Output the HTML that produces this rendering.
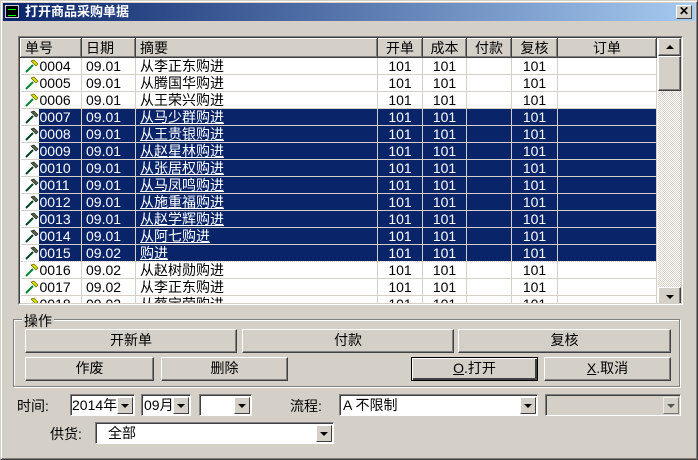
<!DOCTYPE html><html><head><meta charset="utf-8"><style>
*{box-sizing:border-box;margin:0;padding:0}
body{width:698px;height:460px;overflow:hidden;background:#d4d0c8;font-family:"Liberation Sans","Noto Sans CJK SC","WenQuanYi Zen Hei",sans-serif;font-size:13px;color:#000;position:relative}
.abs{position:absolute}
.win{left:0;top:0;width:698px;height:460px;border:1px solid;border-color:#d4d0c8 #404040 #404040 #d4d0c8;box-shadow:inset 1px 1px #fff,inset -1px -1px #808080}
.title{left:3px;top:3px;width:692px;height:18px;background:linear-gradient(90deg,#0a246a,#a6caf0);color:#fff;font-weight:bold;font-size:13px;line-height:18px;padding-left:22px}
.ico{left:5px;top:5px;width:14px;height:13px;background:#000;border:1px solid #ccc}
.ico:after{content:"";position:absolute;left:2px;top:3px;width:8px;height:5px;border-top:1px solid #0f0;border-bottom:1px solid #0f0}
.xb{left:676px;top:5px;width:16px;height:14px;background:#d4d0c8;border:1px solid;border-color:#fff #404040 #404040 #fff;font-size:12px;line-height:11px;text-align:center;font-weight:bold;color:#000}
.grid{left:18px;top:36px;width:665px;height:269px;border:1px solid;border-color:#808080 #fff #fff #808080;background:#fff;overflow:hidden}
.grid-in{position:absolute;left:0;top:0;width:663px;height:267px;border:1px solid;border-color:#404040 #d4d0c8 #d4d0c8 #404040;overflow:hidden}
table{border-collapse:collapse;table-layout:fixed;position:absolute;left:0;top:0}
th{height:19px;background:#d4d0c8;font-weight:normal;border:1px solid;border-color:#fff #404040 #404040 #fff;box-shadow:inset -1px -1px #808080;text-align:left;padding-left:4px;font-size:14px;line-height:16px}
th.c{text-align:center;padding-left:0}
td{height:17px;border-right:1px solid #d4d0c8;border-bottom:1px solid #d4d0c8;font-size:14px;line-height:16px;padding-left:4px;white-space:nowrap;overflow:hidden}
td.n{text-align:center;padding-left:0}
td.i{padding-left:2px}
tr.s td{background:#0a246a;color:#fff;border-color:#d4d0c8}
tr.s td.i{background:linear-gradient(90deg,#fff 18px,#0a246a 18px)}
tr.s td.z{text-decoration:underline}
tr.f td{border-bottom:1px dotted #d4d0c8}
.h{display:inline-block;width:16px;height:15px;vertical-align:-3px;margin-right:1px;position:relative}
.h svg{position:absolute;left:0;top:0}
.sb{left:638px;top:0;width:23px;height:267px;background:repeating-conic-gradient(#fff 0 25%,#d4d0c8 0 50%) 0 0/2px 2px}
.btn3{background:#d4d0c8;border:1px solid;border-color:#fff #404040 #404040 #fff;box-shadow:inset -1px -1px #808080}
.grp{left:13px;top:319px;width:667px;height:68px;border:1px solid #808080;box-shadow:1px 1px #fff,inset 1px 1px #fff}
.gl{left:22px;top:311px;background:#d4d0c8;padding:0 2px;font-size:14px}
.b{position:absolute;height:24px;text-align:center;font-size:14px;line-height:21px;background:#d4d0c8;border:1px solid;border-color:#fff #404040 #404040 #fff;box-shadow:inset -1px -1px #808080}
.b.d{border:1px solid #000;box-shadow:inset 1px 1px #fff,inset -2px -2px #404040,inset -1px -1px #808080}
.cb{position:absolute;height:22px;background:#fff;border:1px solid;border-color:#808080 #fff #fff #808080;box-shadow:inset 1px 1px #404040;font-size:14px;line-height:20px;padding-left:3px;white-space:nowrap}
.cb .ar{position:absolute;right:1px;top:2px;width:16px;height:17px;background:#d4d0c8;border:1px solid;border-color:#fff #404040 #404040 #fff}
.cb .ar:after{content:"";position:absolute;left:3px;top:6px;border:4px solid transparent;border-top:4px solid #000;border-bottom:0}
.lbl{position:absolute;font-size:14px}
</style></head><body>
<div class="abs win"></div>
<div class="abs title">打开商品采购单据</div>
<div class="abs ico"></div>
<div class="abs xb">✕</div>
<div class="abs grid"><div class="grid-in">
<table>
<colgroup><col style="width:61px"><col style="width:54px"><col style="width:242px"><col style="width:45px"><col style="width:44px"><col style="width:45px"><col style="width:46px"><col style="width:99px"></colgroup>
<tr><th>单号</th><th>日期</th><th>摘要</th><th class="c">开单</th><th class="c">成本</th><th class="c">付款</th><th class="c">复核</th><th class="c">订单</th></tr>
<tbody>
<tr><td class="i"><span class="h"><svg width="16" height="15"><path d="M3 13L10 6" stroke="#083" stroke-width="2"/><path d="M8 2L13 7L15 5L11 1Z" fill="#dd0" stroke="#660" stroke-width=".7"/></svg></span>0004</td><td>09.01</td><td class="z">从李正东购进</td><td class="n">101</td><td class="n">101</td><td></td><td class="n">101</td><td></td></tr>
<tr><td class="i"><span class="h"><svg width="16" height="15"><path d="M3 13L10 6" stroke="#083" stroke-width="2"/><path d="M8 2L13 7L15 5L11 1Z" fill="#dd0" stroke="#660" stroke-width=".7"/></svg></span>0005</td><td>09.01</td><td class="z">从腾国华购进</td><td class="n">101</td><td class="n">101</td><td></td><td class="n">101</td><td></td></tr>
<tr><td class="i"><span class="h"><svg width="16" height="15"><path d="M3 13L10 6" stroke="#083" stroke-width="2"/><path d="M8 2L13 7L15 5L11 1Z" fill="#dd0" stroke="#660" stroke-width=".7"/></svg></span>0006</td><td>09.01</td><td class="z">从王荣兴购进</td><td class="n">101</td><td class="n">101</td><td></td><td class="n">101</td><td></td></tr>
<tr class="s"><td class="i"><span class="h"><svg width="16" height="15"><path d="M3 13L10 6" stroke="#042" stroke-width="2"/><path d="M8 2L13 7L15 5L11 1Z" fill="#564" stroke="#222" stroke-width=".7"/></svg></span>0007</td><td>09.01</td><td class="z">从马少群购进</td><td class="n">101</td><td class="n">101</td><td></td><td class="n">101</td><td></td></tr>
<tr class="s"><td class="i"><span class="h"><svg width="16" height="15"><path d="M3 13L10 6" stroke="#042" stroke-width="2"/><path d="M8 2L13 7L15 5L11 1Z" fill="#564" stroke="#222" stroke-width=".7"/></svg></span>0008</td><td>09.01</td><td class="z">从王贵银购进</td><td class="n">101</td><td class="n">101</td><td></td><td class="n">101</td><td></td></tr>
<tr class="s"><td class="i"><span class="h"><svg width="16" height="15"><path d="M3 13L10 6" stroke="#042" stroke-width="2"/><path d="M8 2L13 7L15 5L11 1Z" fill="#564" stroke="#222" stroke-width=".7"/></svg></span>0009</td><td>09.01</td><td class="z">从赵星林购进</td><td class="n">101</td><td class="n">101</td><td></td><td class="n">101</td><td></td></tr>
<tr class="s"><td class="i"><span class="h"><svg width="16" height="15"><path d="M3 13L10 6" stroke="#042" stroke-width="2"/><path d="M8 2L13 7L15 5L11 1Z" fill="#564" stroke="#222" stroke-width=".7"/></svg></span>0010</td><td>09.01</td><td class="z">从张居权购进</td><td class="n">101</td><td class="n">101</td><td></td><td class="n">101</td><td></td></tr>
<tr class="s"><td class="i"><span class="h"><svg width="16" height="15"><path d="M3 13L10 6" stroke="#042" stroke-width="2"/><path d="M8 2L13 7L15 5L11 1Z" fill="#564" stroke="#222" stroke-width=".7"/></svg></span>0011</td><td>09.01</td><td class="z">从马凤鸣购进</td><td class="n">101</td><td class="n">101</td><td></td><td class="n">101</td><td></td></tr>
<tr class="s"><td class="i"><span class="h"><svg width="16" height="15"><path d="M3 13L10 6" stroke="#042" stroke-width="2"/><path d="M8 2L13 7L15 5L11 1Z" fill="#564" stroke="#222" stroke-width=".7"/></svg></span>0012</td><td>09.01</td><td class="z">从施重福购进</td><td class="n">101</td><td class="n">101</td><td></td><td class="n">101</td><td></td></tr>
<tr class="s"><td class="i"><span class="h"><svg width="16" height="15"><path d="M3 13L10 6" stroke="#042" stroke-width="2"/><path d="M8 2L13 7L15 5L11 1Z" fill="#564" stroke="#222" stroke-width=".7"/></svg></span>0013</td><td>09.01</td><td class="z">从赵学辉购进</td><td class="n">101</td><td class="n">101</td><td></td><td class="n">101</td><td></td></tr>
<tr class="s"><td class="i"><span class="h"><svg width="16" height="15"><path d="M3 13L10 6" stroke="#042" stroke-width="2"/><path d="M8 2L13 7L15 5L11 1Z" fill="#564" stroke="#222" stroke-width=".7"/></svg></span>0014</td><td>09.01</td><td class="z">从阿七购进</td><td class="n">101</td><td class="n">101</td><td></td><td class="n">101</td><td></td></tr>
<tr class="s f"><td class="i"><span class="h"><svg width="16" height="15"><path d="M3 13L10 6" stroke="#042" stroke-width="2"/><path d="M8 2L13 7L15 5L11 1Z" fill="#564" stroke="#222" stroke-width=".7"/></svg></span>0015</td><td>09.02</td><td class="z">购进</td><td class="n">101</td><td class="n">101</td><td></td><td class="n">101</td><td></td></tr>
<tr><td class="i"><span class="h"><svg width="16" height="15"><path d="M3 13L10 6" stroke="#083" stroke-width="2"/><path d="M8 2L13 7L15 5L11 1Z" fill="#dd0" stroke="#660" stroke-width=".7"/></svg></span>0016</td><td>09.02</td><td class="z">从赵树勋购进</td><td class="n">101</td><td class="n">101</td><td></td><td class="n">101</td><td></td></tr>
<tr><td class="i"><span class="h"><svg width="16" height="15"><path d="M3 13L10 6" stroke="#083" stroke-width="2"/><path d="M8 2L13 7L15 5L11 1Z" fill="#dd0" stroke="#660" stroke-width=".7"/></svg></span>0017</td><td>09.02</td><td class="z">从李正东购进</td><td class="n">101</td><td class="n">101</td><td></td><td class="n">101</td><td></td></tr>
<tr><td class="i"><span class="h"><svg width="16" height="15"><path d="M3 13L10 6" stroke="#083" stroke-width="2"/><path d="M8 2L13 7L15 5L11 1Z" fill="#dd0" stroke="#660" stroke-width=".7"/></svg></span>0018</td><td>09.02</td><td class="z">从蔡宝荣购进</td><td class="n">101</td><td class="n">101</td><td></td><td class="n">101</td><td></td></tr>
</tbody></table>
<div class="abs sb">
<div class="abs btn3" style="left:0;top:0;width:23px;height:18px"><div class="abs" style="left:7px;top:6px;border:4px solid transparent;border-bottom:4px solid #000;border-top:0"></div></div>
<div class="abs btn3" style="left:0;top:18px;width:23px;height:35px"></div>
<div class="abs btn3" style="left:0;top:249px;width:23px;height:18px"><div class="abs" style="left:7px;top:7px;border:4px solid transparent;border-top:4px solid #000;border-bottom:0"></div></div>
</div>
</div></div>

<div class="abs grp"></div>
<div class="abs gl">操作</div>
<div class="b" style="left:25px;top:329px;width:212px">开新单</div>
<div class="b" style="left:242px;top:329px;width:212px">付款</div>
<div class="b" style="left:458px;top:329px;width:213px">复核</div>
<div class="b" style="left:25px;top:357px;width:129px">作废</div>
<div class="b" style="left:161px;top:357px;width:127px">删除</div>
<div class="b d" style="left:411px;top:357px;width:127px"><u>O</u>.打开</div>
<div class="b" style="left:544px;top:357px;width:127px"><u>X</u>.取消</div>

<div class="lbl" style="left:17px;top:396px">时间:</div>
<div class="cb" style="left:70px;top:394px;width:65px;padding-left:1px">2014年<span class="ar"></span></div>
<div class="cb" style="left:141px;top:394px;width:50px;padding-left:2px">09月<span class="ar"></span></div>
<div class="cb" style="left:199px;top:394px;width:53px"><span class="ar"></span></div>
<div class="lbl" style="left:290px;top:396px">流程:</div>
<div class="cb" style="left:339px;top:394px;width:199px">A 不限制<span class="ar"></span></div>
<div class="cb" style="left:545px;top:394px;width:136px;background:#d4d0c8"><span class="ar" style="opacity:.6"></span></div>
<div class="lbl" style="left:50px;top:424px">供货:</div>
<div class="cb" style="left:95px;top:422px;width:239px;padding-left:12px">全部<span class="ar"></span></div>
</body></html>
